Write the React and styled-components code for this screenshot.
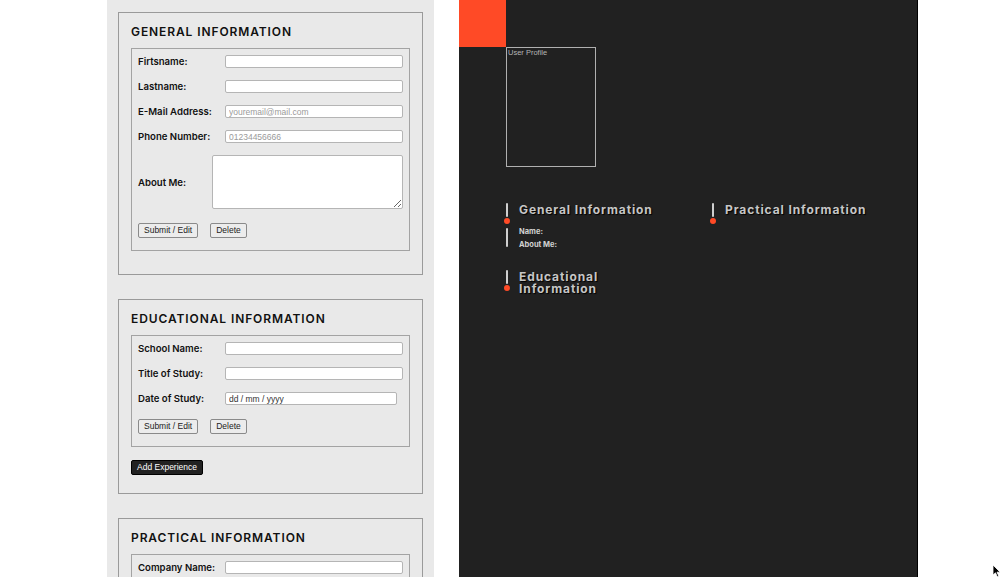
import React from 'react';
import styled, { createGlobalStyle } from 'styled-components';

const Global = createGlobalStyle`
  html, body { margin: 0; padding: 0; background: #fff; }
  body { font-family: Inter, "Liberation Sans", sans-serif; }
  * { box-sizing: border-box; }
`;

const Page = styled.div`
  display: flex;
  align-items: stretch;
  gap: 25px;
  padding-left: 107px;
  min-height: 100vh;
`;

const FormColumn = styled.div`
  width: 327px;
  background: #e9e9e9;
  padding: 12px 11px;
  display: flex;
  flex-direction: column;
  gap: 24px;
`;

const Card = styled.section`
  border: 1px solid #9a9a9a;
  padding: 11px 12px ${(p) => p.$pb}px 12px;
  display: flex;
  flex-direction: column;
  align-items: flex-start;
  gap: 13px;
`;

const CardTitle = styled.h2`
  margin: 0 0 -4px;
  font-family: Inter, "Liberation Sans", sans-serif;
  font-size: 12px;
  line-height: 15px;
  font-weight: 600;
  letter-spacing: 0.9px;
  color: #111;
`;

const FieldBox = styled.div`
  align-self: stretch;
  border: 1px solid #a3a3a3;
  padding: 6px 6px 12px 6px;
  display: flex;
  flex-direction: column;
  gap: 12px;
`;

const Row = styled.label`
  display: flex;
  align-items: center;
  justify-content: space-between;
  min-height: 13px;
`;

const Label = styled.span`
  font-family: Inter, "Liberation Sans", sans-serif;
  font-size: 9.6px;
  font-weight: 600;
  color: #111;
`;

const TextInput = styled.input`
  width: ${(p) => p.$w || 178}px;
  height: 13px;
  margin-right: ${(p) => p.$mr || 0}px;
  padding: 0 3px;
  border: 1px solid #b5b5b5;
  border-radius: 2px;
  background: #fff;
  font-family: "Liberation Sans", Arial, sans-serif;
  font-size: 8.5px;
  color: #222;
  outline: none;
  &::placeholder { color: ${(p) => (p.$dark ? '#333' : '#9a9a9a')}; }
`;

const TextArea = styled.textarea`
  width: 191px;
  height: 54px;
  border: 1px solid #b5b5b5;
  border-radius: 2px;
  background: #fff;
  display: block;
`;

const Buttons = styled.div`
  display: flex;
  gap: 12px;
  margin-top: 2px;
`;

const Button = styled.button`
  height: 15px;
  padding: 0 5px;
  border: 1px solid #8a8a8a;
  border-radius: 2px;
  background: ${(p) => (p.$dark ? '#222' : '#ececec')};
  color: ${(p) => (p.$dark ? '#fff' : '#222')};
  border-color: ${(p) => (p.$dark ? '#000' : '#8a8a8a')};
  font-family: "Liberation Sans", Arial, sans-serif;
  font-size: 8.5px;
  line-height: 13px;
  cursor: pointer;
`;

const Preview = styled.div`
  width: 459px;
  background: #212121;
  border-right: 1px solid #000;
  display: flex;
  flex-direction: column;
`;

const Accent = styled.div`
  width: 47px;
  height: 47px;
  background: #ff4a26;
`;

const PreviewBody = styled.div`
  padding-left: 47px;
  display: flex;
  flex-direction: column;
  gap: 36px;
`;

const ProfileBox = styled.div`
  width: 90px;
  height: 120px;
  border: 1px solid #b0b0b0;
  color: #b4b4b4;
  font-family: "Liberation Sans", Arial, sans-serif;
  font-size: 7.5px;
  line-height: 10px;
  padding-left: 1px;
`;

const SectionGrid = styled.div`
  display: grid;
  grid-template-columns: 206px 205px;
  row-gap: 19px;
  align-items: start;
`;

const Section = styled.div`
  display: flex;
  gap: 11px;
`;

const Timeline = styled.div`
  width: 2px;
  display: flex;
  flex-direction: column;
  align-items: center;
`;

const Bar = styled.div`
  width: 2px;
  height: 14px;
  background: #cfcfcf;
  border-radius: 1px;
  flex-shrink: 0;
`;

const TailBar = styled(Bar)`
  height: auto;
  flex: 1;
  margin: 4px 0 4px;
`;

const Dot = styled.div`
  width: 6px;
  height: 6px;
  border-radius: 50%;
  background: #ff4a26;
  margin-top: 1px;
  flex-shrink: 0;
`;

const SectionContent = styled.div`
  width: 150px;
  padding-top: 1px;
`;

const SectionHeading = styled.h3`
  margin: 0;
  font-family: Inter, "Liberation Sans", sans-serif;
  font-size: 12px;
  line-height: 12px;
  font-weight: 700;
  letter-spacing: 0.9px;
  color: #c6c6c6;
  text-shadow: 1px 1px 1px #000;
`;

const Fields = styled.div`
  margin-top: 9px;
  font-family: Inter, "Liberation Sans", sans-serif;
  font-size: 7.5px;
  line-height: 13px;
  font-weight: 700;
  color: #d2d2d2;
`;

const Cursor = styled.svg`
  position: fixed;
  left: 992px;
  top: 564px;
  pointer-events: none;
`;

function Field({ label, ...rest }) {
  return (
    <Row>
      <Label>{label}</Label>
      <TextInput {...rest} />
    </Row>
  );
}

function PreviewSection({ title, fields }) {
  return (
    <Section>
      <Timeline>
        <Bar />
        <Dot />
        {fields && <TailBar />}
      </Timeline>
      <SectionContent>
        <SectionHeading>{title}</SectionHeading>
        {fields && (
          <Fields>
            {fields.map((f) => (
              <div key={f}>{f}</div>
            ))}
          </Fields>
        )}
      </SectionContent>
    </Section>
  );
}

export default function App() {
  return (
    <>
      <Global />
      <Page>
        <FormColumn>
          <Card $pb={23}>
            <CardTitle>GENERAL INFORMATION</CardTitle>
            <FieldBox>
              <Field label="Firtsname:" type="text" />
              <Field label="Lastname:" type="text" />
              <Field label="E-Mail Address:" type="email" placeholder="youremail@mail.com" />
              <Field label="Phone Number:" type="tel" placeholder="01234456666" />
              <Row>
                <Label>About Me:</Label>
                <TextArea />
              </Row>
              <Buttons>
                <Button>Submit / Edit</Button>
                <Button>Delete</Button>
              </Buttons>
            </FieldBox>
          </Card>

          <Card $pb={18}>
            <CardTitle>EDUCATIONAL INFORMATION</CardTitle>
            <FieldBox>
              <Field label="School Name:" type="text" />
              <Field label="Title of Study:" type="text" />
              <Field label="Date of Study:" type="text" placeholder="dd / mm / yyyy" $w={172} $mr={6} $dark />
              <Buttons>
                <Button>Submit / Edit</Button>
                <Button>Delete</Button>
              </Buttons>
            </FieldBox>
            <Button $dark>Add Experience</Button>
          </Card>

          <Card $pb={18}>
            <CardTitle>PRACTICAL INFORMATION</CardTitle>
            <FieldBox>
              <Field label="Company Name:" type="text" />
              <Buttons>
                <Button>Submit / Edit</Button>
                <Button>Delete</Button>
              </Buttons>
            </FieldBox>
            <Button $dark>Add Experience</Button>
          </Card>
        </FormColumn>

        <Preview>
          <Accent />
          <PreviewBody>
            <ProfileBox>User Profile</ProfileBox>
            <SectionGrid>
              <PreviewSection title="General Information" fields={['Name:', 'About Me:']} />
              <PreviewSection title="Practical Information" />
              <PreviewSection title="Educational Information" />
            </SectionGrid>
          </PreviewBody>
        </Preview>
      </Page>
      <Cursor width="9" height="14" viewBox="0 0 9 14">
        <path d="M1 1 L1 11 L3.5 8.8 L5.3 12.8 L6.8 12.1 L5 8.2 L8.2 8.2 Z" fill="#000" stroke="#fff" strokeWidth="0.8" />
      </Cursor>
    </>
  );
}
